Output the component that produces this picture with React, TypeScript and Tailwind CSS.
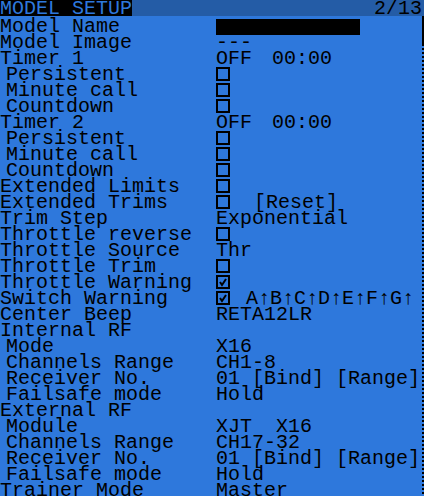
import React from "react";

const Box = ({ checked = false }: { checked?: boolean }) => (
  <svg width="14" height="14" viewBox="0 0 14 14" className="block">
    <rect x="1" y="1" width="12" height="12" fill="none" stroke="#000" strokeWidth="2" />
    {checked && <path d="M4 7 L6 10 L10 4" fill="none" stroke="#000" strokeWidth="2" />}
  </svg>
);

type Row = { label: string; indent?: boolean; value?: React.ReactNode };

const rows: Row[] = [
  { label: "Model Name", value: <div className="w-[144px] h-[16px] bg-black" /> },
  { label: "Model Image", value: "---" },
  { label: "Timer 1", value: <span>OFF<span className="ml-[20px]">00:00</span></span> },
  { label: "Persistent", indent: true, value: <Box /> },
  { label: "Minute call", indent: true, value: <Box /> },
  { label: "Countdown", indent: true, value: <Box /> },
  { label: "Timer 2", value: <span>OFF<span className="ml-[20px]">00:00</span></span> },
  { label: "Persistent", indent: true, value: <Box /> },
  { label: "Minute call", indent: true, value: <Box /> },
  { label: "Countdown", indent: true, value: <Box /> },
  { label: "Extended Limits", value: <Box /> },
  { label: "Extended Trims", value: <span className="flex items-start gap-[24px]"><Box /><span>[Reset]</span></span> },
  { label: "Trim Step", value: "Exponential" },
  { label: "Throttle reverse", value: <Box /> },
  { label: "Throttle Source", value: "Thr" },
  { label: "Throttle Trim", value: <Box /> },
  { label: "Throttle Warning", value: <Box checked /> },
  { label: "Switch Warning", value: <span className="flex items-start gap-[16px]"><Box checked /><span>A↑B↑C↑D↑E↑F↑G↑</span></span> },
  { label: "Center Beep", value: "RETA12LR" },
  { label: "Internal RF" },
  { label: "Mode", indent: true, value: "X16" },
  { label: "Channels Range", indent: true, value: "CH1-8" },
  { label: "Receiver No.", indent: true, value: "01 [Bind] [Range]" },
  { label: "Failsafe mode", indent: true, value: "Hold" },
  { label: "External RF" },
  { label: "Module", indent: true, value: "XJT  X16" },
  { label: "Channels Range", indent: true, value: "CH17-32" },
  { label: "Receiver No.", indent: true, value: "01 [Bind] [Range]" },
  { label: "Failsafe mode", indent: true, value: "Hold" },
  { label: "Trainer Mode", value: "Master" },
];

export default function App() {
  return (
    <div
      className="relative w-[424px] h-[496px] overflow-hidden bg-[#2e78dc] text-black text-[20px] leading-[16px] whitespace-pre"
      style={{ fontFamily: '"Liberation Mono", "DejaVu Sans Mono", monospace' }}
    >
      <div className="flex h-[16px] bg-[#245ca6] items-start">
        <div className="w-[132px] h-[16px] bg-black text-[#2e78dc] pt-[1px]">MODEL SETUP</div>
        <div className="flex-1 text-right pr-[2px] pt-[1px]">2/13</div>
      </div>
      <div className="pt-[2px] flex flex-col">
        {rows.map((r, i) => (
          <div key={i} className="flex h-[16px] shrink-0">
            <div className={`w-[216px] shrink-0 pt-[1px] ${r.indent ? "pl-[6px]" : ""}`}>{r.label}</div>
            <div className="flex-1 flex items-start pt-[1px]">{r.value}</div>
          </div>
        ))}
      </div>
      <div className="absolute right-0 top-[16px] bottom-0 w-[2px] bg-[repeating-linear-gradient(to_bottom,#000_0px,#000_2px,transparent_2px,transparent_4px)]" />
      <div className="absolute right-0 top-[16px] h-[28px] w-[2px] bg-black" />
    </div>
  );
}
